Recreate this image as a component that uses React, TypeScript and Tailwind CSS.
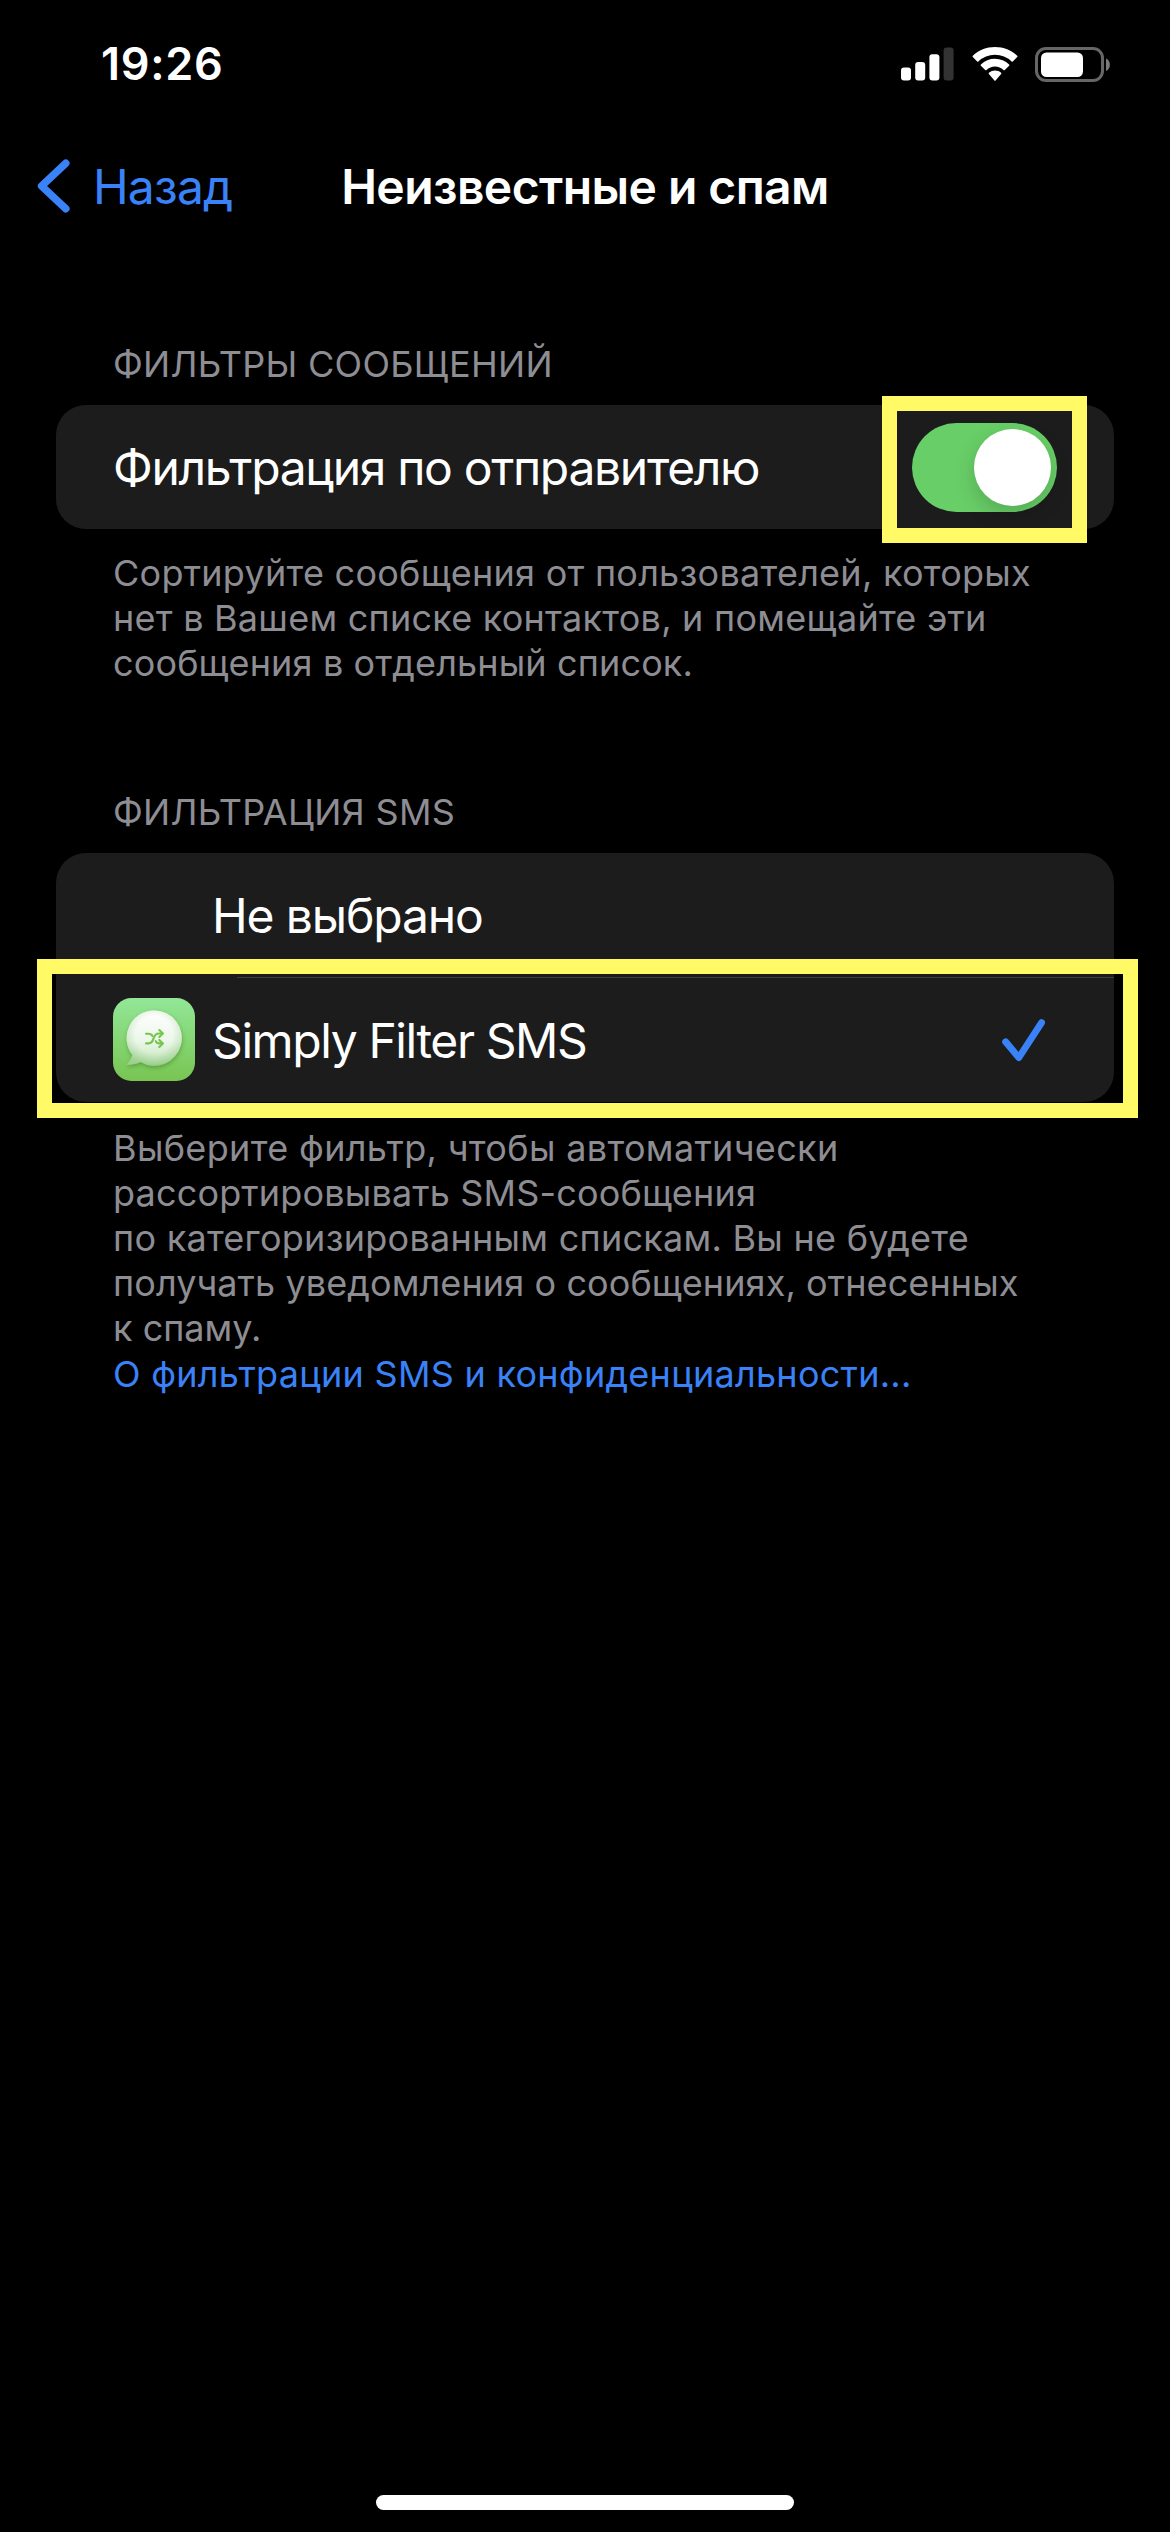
import type { ReactNode } from "react";

function StatusBar() {
  return (
    <header className="flex h-[128px] shrink-0 items-center justify-between pl-[101px] pr-[60px]">
      <span className="text-[45px] font-semibold leading-[128px] tracking-[0.7px] text-white">19:26</span>
      <div className="flex items-center">
        <svg width="54" height="34" viewBox="0 0 54 34" className="mr-[18px]">
          <rect x="1" y="20.5" width="10" height="13" rx="3" fill="#fff" />
          <rect x="15.2" y="15" width="10" height="18.5" rx="3" fill="#fff" />
          <rect x="29.4" y="7.2" width="10" height="26.3" rx="3" fill="#fff" />
          <rect x="43.6" y="0.5" width="10" height="33" rx="3" fill="#333" />
        </svg>
        <svg width="46" height="34" viewBox="0 0 46 34" className="mr-[17px]">
          <path d="M23 0C31.6 0 39.4 3.3 45.2 8.8a.9.9 0 0 1 0 1.3l-4.4 4.4a.9.9 0 0 1-1.2 0A24 24 0 0 0 23 7.8 24 24 0 0 0 6.4 14.5a.9.9 0 0 1-1.2 0L.8 10.1a.9.9 0 0 1 0-1.3C6.6 3.3 14.4 0 23 0Z" fill="#fff" />
          <path d="M23 11.8c5.5 0 10.4 2.1 14.1 5.6a.9.9 0 0 1 0 1.3l-4.3 4.3a.9.9 0 0 1-1.3 0A12.4 12.4 0 0 0 23 19.5c-3.2 0-6.2 1.3-8.5 3.5a.9.9 0 0 1-1.3 0l-4.3-4.3a.9.9 0 0 1 0-1.3A20.3 20.3 0 0 1 23 11.8Z" fill="#fff" />
          <path d="M23 23.4c2.4 0 4.5.9 6.1 2.3a.9.9 0 0 1 0 1.3l-5.5 6.4a.9.9 0 0 1-1.2 0L16.9 27a.9.9 0 0 1 0-1.3A9.3 9.3 0 0 1 23 23.4Z" fill="#fff" />
        </svg>
        <svg width="75" height="35" viewBox="0 0 75 35">
          <rect x="1.5" y="1.5" width="66" height="32" rx="9.5" fill="none" stroke="#666" strokeWidth="3" />
          <rect x="6" y="5.5" width="42" height="24.5" rx="5.5" fill="#fff" />
          <path d="M71 11.5a7 7 0 0 1 0 12.5Z" fill="#7a7a7a" />
        </svg>
      </div>
    </header>
  );
}

function NavBar() {
  return (
    <nav className="relative flex h-[116px] shrink-0 items-center justify-center">
      <div className="absolute inset-y-0 left-[37px] flex items-center">
        <svg width="33" height="54" viewBox="0 0 33 54" fill="none">
          <path d="M28.8 4.2 4.6 27l24.2 22.8" stroke="#3a82f7" strokeWidth="7.5" strokeLinecap="round" strokeLinejoin="round" />
        </svg>
        <span className="ml-[23px] pt-px text-[48px] leading-[115px] tracking-[-0.82px] text-[#3a82f7]">Назад</span>
      </div>
      <h1 className="whitespace-nowrap pt-px text-[48px] font-semibold leading-[115px] tracking-[-0.57px] text-white">Неизвестные и спам</h1>
    </nav>
  );
}

function SectionTitle({ children }: { children: ReactNode }) {
  return (
    <h2 className="mb-[19px] h-[44px] pl-[57px] text-[36px] leading-[44px] tracking-[0.3px] text-[#8d8d93]">{children}</h2>
  );
}

function Toggle() {
  return (
    <div className="flex h-[89px] w-[145px] items-center justify-end rounded-full bg-[#68ce67] pr-[6px]">
      <div className="size-[77px] rounded-full bg-white shadow-[0_8px_20px_rgba(0,0,0,0.17)]" />
    </div>
  );
}

function FilterAppIcon() {
  return (
    <svg width="82" height="83" viewBox="0 0 82 83">
      <defs>
        <linearGradient id="tile" x1="0" y1="0" x2="0" y2="1">
          <stop offset="0" stopColor="#93e797" />
          <stop offset="1" stopColor="#78c552" />
        </linearGradient>
        <linearGradient id="bubble" x1="0" y1="0" x2="0" y2="1">
          <stop offset="0" stopColor="#ffffff" />
          <stop offset="0.55" stopColor="#e2f3de" />
          <stop offset="1" stopColor="#9fd48f" />
        </linearGradient>
        <radialGradient id="glow" cx="0.5" cy="0.44" r="0.56">
          <stop offset="0.6" stopColor="#fff" stopOpacity="0.35" />
          <stop offset="1" stopColor="#86bf78" stopOpacity="0.3" />
        </radialGradient>
        <filter id="drop" x="-20%" y="-20%" width="150%" height="150%">
          <feDropShadow dx="0.5" dy="2" stdDeviation="2" floodColor="#2f6a1c" floodOpacity="0.45" />
        </filter>
      </defs>
      <rect width="82" height="83" rx="18.5" fill="url(#tile)" />
      <g filter="url(#drop)">
        <path d="M41.2 12.4a27.6 27.7 0 1 1-13.8 51.7c-4 1.9-8.7 2.9-14.1 2.7 3.1-2.7 5.1-5.9 6.1-9.7A27.6 27.7 0 0 1 41.2 12.4Z" fill="url(#bubble)" />
      </g>
      <path d="M41.2 12.4a27.6 27.7 0 1 1-13.8 51.7c-4 1.9-8.7 2.9-14.1 2.7 3.1-2.7 5.1-5.9 6.1-9.7A27.6 27.7 0 0 1 41.2 12.4Z" fill="url(#glow)" />
      <g fill="none" stroke="#74c74c" strokeWidth="2.1" strokeLinecap="round" strokeLinejoin="round">
        <path d="M33 45.4h2.6c2.6 0 3.7-1.3 4.7-4.2l.6-1.6c1-2.9 2.4-4.1 4.9-4.1h3.600" />
        <path d="M33 35.8h2.6c2 0 3.1.8 3.9 2.3" />
        <path d="M42.7 43.2c.8 1.5 1.7 2.2 3.4 2.2h3.3" />
        <path d="m46.3 32 3.6 3.5-3.6 3.5M46.3 41.9l3.6 3.5-3.6 3.5" />
      </g>
    </svg>
  );
}

function Check() {
  return (
    <svg width="44" height="44" viewBox="0 0 44 44" fill="none">
      <path d="M4.6 23.8 17.8 39.600 40.600 4.600" stroke="#3a82f7" strokeWidth="6.8" strokeLinecap="round" strokeLinejoin="round" />
    </svg>
  );
}

export default function App() {
  return (
    <div className="flex h-[2532px] w-[1170px] flex-col overflow-hidden bg-black font-['Inter',sans-serif]">
      <StatusBar />
      <NavBar />

      <main className="flex flex-1 flex-col px-[56px] pt-[98px]">
        <section>
          <SectionTitle>ФИЛЬТРЫ СООБЩЕНИЙ</SectionTitle>
          <div className="relative flex h-[124px] items-center justify-between rounded-[30px] bg-[#1c1c1c] px-[57px]">
            <span className="whitespace-nowrap pt-[2px] text-[48px] leading-[58px] tracking-[-1.32px] text-white">Фильтрация по отправителю</span>
            <Toggle />
            <div className="absolute left-[826px] top-[-9px] h-[147px] w-[205px] border-[15px] border-[#fffa66]" />
          </div>
          <div className="mt-[22px] whitespace-nowrap pl-[57px] text-[36px] leading-[45.2px] text-[#8d8d93]">
            <p className="tracking-[0.26px]">Сортируйте сообщения от пользователей, которых</p>
            <p className="tracking-[0.24px]">нет в Вашем списке контактов, и помещайте эти</p>
            <p className="tracking-[0.14px]">сообщения в отдельный список.</p>
          </div>
        </section>

        <section className="mt-[103px]">
          <SectionTitle>ФИЛЬТРАЦИЯ SMS</SectionTitle>
          <div className="relative rounded-[30px] bg-[#1c1c1c]">
            <div className="flex h-[124px] items-center pl-[156px]">
              <span className="pt-[3px] text-[48px] leading-[58px] tracking-[-1.14px] text-white">Не выбрано</span>
            </div>
            <div className="ml-[181px] h-px bg-[#3d3d41]" />
            <div className="flex h-[124px] items-center pl-[57px] pr-[69px]">
              <FilterAppIcon />
              <span className="ml-[17px] flex-1 pt-[3px] text-[48px] leading-[58px] tracking-[-1.4px] text-white">Simply Filter SMS</span>
              <Check />
            </div>
            <div className="absolute left-[-19px] top-[106px] h-[159px] w-[1101px] border-[15px] border-[#fffa66]" />
          </div>
          <div className="mt-[24px] whitespace-nowrap pl-[57px] text-[36px] leading-[45.2px] text-[#8d8d93]">
            <p className="tracking-[0.33px]">Выберите фильтр, чтобы автоматически</p>
            <p className="tracking-[0.16px]">рассортировывать SMS-сообщения</p>
            <p className="tracking-[0.26px]">по категоризированным спискам. Вы не будете</p>
            <p className="tracking-[0.1px]">получать уведомления о сообщениях, отнесенных</p>
            <p>к спаму.</p>
            <a className="block tracking-[0.27px] text-[#3a82f7]">О фильтрации SMS и конфиденциальности...</a>
          </div>
        </section>
      </main>

      <footer className="flex shrink-0 justify-center pb-[22px]">
        <div className="h-[15px] w-[418px] rounded-full bg-white" />
      </footer>
    </div>
  );
}
